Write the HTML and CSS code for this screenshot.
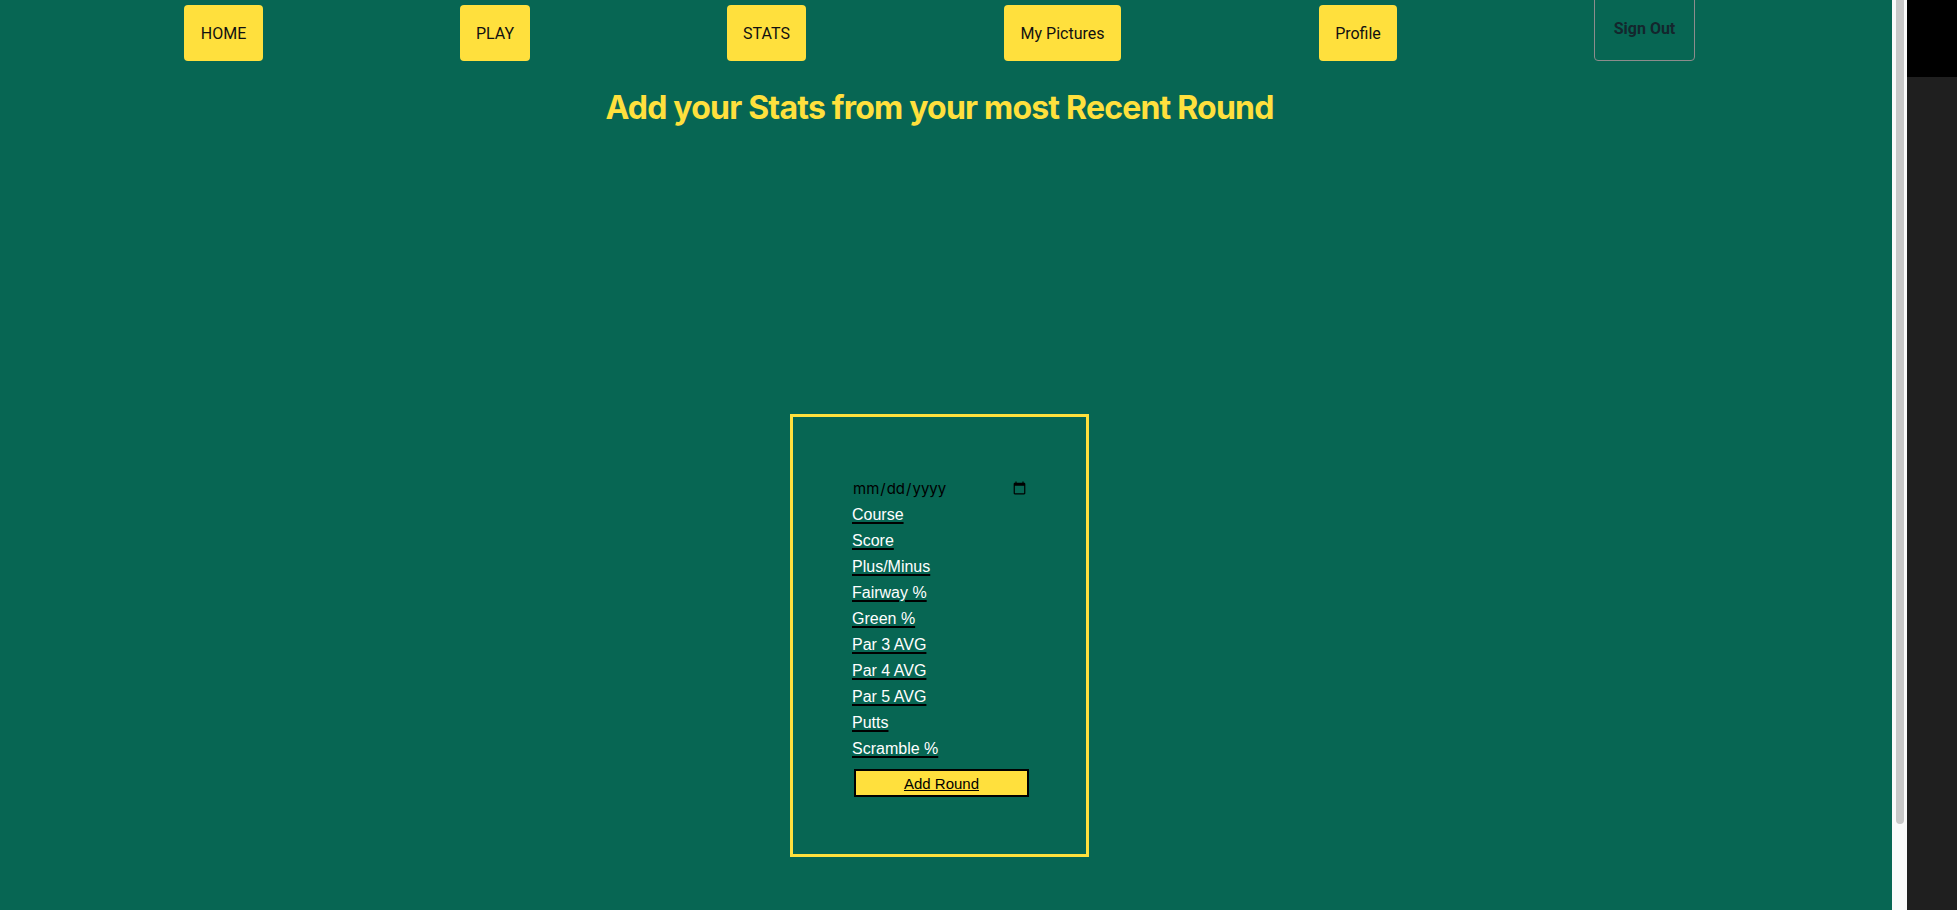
FILE: index.html
```html
<!DOCTYPE html>
<html lang="en">
<head>
<meta charset="utf-8">
<title>Add Stats</title>
<link rel="stylesheet" href="styles.css">
</head>
<body>
<div class="app">
  <div class="page">
    <nav class="nav">
      <a class="nav-btn nav-home">HOME</a>
      <a class="nav-btn nav-play">PLAY</a>
      <a class="nav-btn nav-stats">STATS</a>
      <a class="nav-btn nav-pics">My Pictures</a>
      <a class="nav-btn nav-profile">Profile</a>
      <button class="signout" type="button">Sign Out</button>
    </nav>
    <div class="content">
      <h1 class="title">Add your Stats from your most Recent Round</h1>
      <form class="stats-form">
        <input class="date-input" type="date">
        <span class="field">Course</span>
        <span class="field">Score</span>
        <span class="field">Plus/Minus</span>
        <span class="field">Fairway %</span>
        <span class="field">Green %</span>
        <span class="field">Par 3 AVG</span>
        <span class="field">Par 4 AVG</span>
        <span class="field">Par 5 AVG</span>
        <span class="field">Putts</span>
        <span class="field">Scramble %</span>
        <button class="add-btn" type="button">Add Round</button>
      </form>
    </div>
  </div>
  <div class="scrollbar"><div class="thumb"></div></div>
  <div class="side"><div class="side-top"></div></div>
</div>
</body>
</html>
```
FILE: styles.css
```css
html, body {
  margin: 0;
  padding: 0;
  height: 910px;
  overflow: hidden;
}

.app {
  display: flex;
  height: 910px;
}

.page {
  width: 1892px;
  flex: none;
  background: #076653;
  overflow: hidden;
}

.nav {
  display: flex;
  align-items: flex-end;
  gap: 197px;
  padding-left: 184px;
  height: 66px;
  margin-top: -5px;
}

.nav-btn {
  display: flex;
  align-items: center;
  justify-content: center;
  box-sizing: border-box;
  height: 56px;
  padding: 0;
  background: #ffe03d;
  border-radius: 4px;
  color: #111111;
  font-family: Roboto, "Liberation Sans", sans-serif;
  font-size: 16px;
  cursor: pointer;
}

.nav-home { width: 79px; }
.nav-play { width: 70px; }
.nav-stats { width: 79px; margin-right: 1px; }
.nav-pics { width: 117px; margin-right: 1px; }
.nav-profile { width: 78px; }

.signout {
  width: 101px;
  height: 66px;
  padding: 0;
  background: transparent;
  border: 1px solid #8c8c8c;
  border-radius: 4px;
  color: #14262d;
  font-family: Roboto, "Liberation Sans", sans-serif;
  font-weight: 700;
  font-size: 16px;
}

.content {
  padding-right: 13px;
}

.title {
  margin: 27px 0 0;
  line-height: 40px;
  font-family: Inter, "Noto Sans", sans-serif;
  font-weight: 700;
  font-size: 32px;
  letter-spacing: -0.8px;
  color: #ffe03d;
  text-align: center;
}

.stats-form {
  display: flex;
  flex-direction: column;
  align-items: flex-start;
  width: 177px;
  margin: 286px auto 0;
  padding: 58px 57px 57px 59px;
  border: 3px solid #ffe03d;
}

.date-input {
  width: 177px;
  height: 26px;
  padding: 0;
  border: none;
  background: transparent;
  color: #000;
  font-family: Inter, "Noto Sans", sans-serif;
  font-size: 15px;
  box-sizing: border-box;
}

.field {
  display: block;
  line-height: 26px;
  padding-top: 1px;
  margin-bottom: -1px;
  font-family: "Liberation Sans", Arial, sans-serif;
  font-size: 16px;
  color: #ffffff;
  text-decoration: underline;
  text-decoration-color: #000;
  text-decoration-thickness: 2px;
  text-underline-offset: 2px;
}

.add-btn {
  width: 175px;
  height: 28px;
  margin: 8px 0 0 2px;
  padding: 0;
  background: #ffe03d;
  border: 2px solid #000;
  color: #000;
  font-family: "Liberation Sans", Arial, sans-serif;
  font-size: 15px;
  text-decoration: underline;
}

.scrollbar {
  width: 15px;
  flex: none;
  background: #fafafa;
  box-sizing: border-box;
  padding: 0 3px 0 4px;
}

.thumb {
  height: 824px;
  background: #c8c8c8;
  border-radius: 0 0 4px 4px;
}

.side {
  flex: 1;
  background: #1f1f1f;
}

.side-top {
  height: 77px;
  background: #000;
}
```
